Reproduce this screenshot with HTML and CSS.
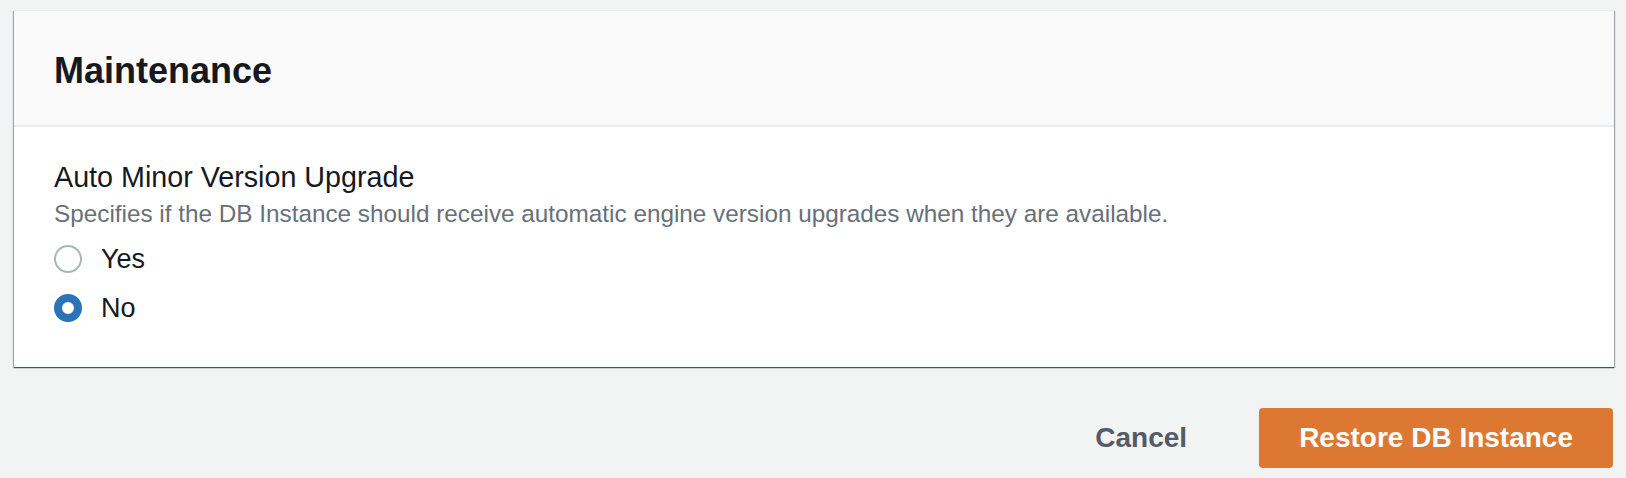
FILE: index.html
```html
<!DOCTYPE html>
<html lang="en">
<head>
<meta charset="utf-8">
<title>Maintenance</title>
<link rel="stylesheet" href="styles.css">
</head>
<body>
<div class="page">
  <section class="card">
    <header class="card-header">
      <h2 class="card-title">Maintenance</h2>
    </header>
    <div class="card-body">
      <div class="field-label">Auto Minor Version Upgrade</div>
      <div class="field-desc">Specifies if the DB Instance should receive automatic engine version upgrades when they are available.</div>
      <div class="radio-group">
        <label class="radio-row">
          <span class="radio"></span>
          <span class="radio-text">Yes</span>
        </label>
        <label class="radio-row">
          <span class="radio radio-checked"></span>
          <span class="radio-text">No</span>
        </label>
      </div>
    </div>
  </section>
  <div class="footer">
    <button class="btn-link" type="button">Cancel</button>
    <button class="btn-primary" type="button">Restore DB Instance</button>
  </div>
</div>
</body>
</html>
```

FILE: styles.css
```css
html, body {
  margin: 0;
  padding: 0;
  background: #f2f3f3;
  font-family: "Liberation Sans", Arial, sans-serif;
  color: #16191f;
}

.page {
  padding: 10px 12px 0 14px;
}

.card {
  background: #ffffff;
  border-top: 1px solid #eaeded;
  box-shadow: 0 1px 1px 0 rgba(0, 28, 36, 0.45),
              1px 1px 1px 0 rgba(0, 28, 36, 0.3),
              -1px 1px 1px 0 rgba(0, 28, 36, 0.3);
}

.card-header {
  background: #fafafa;
  border-bottom: 2px solid #eaeded;
  padding: 38px 40px 32px 40px;
}

.card-title {
  margin: 0;
  font-size: 36px;
  line-height: 44px;
  font-weight: 700;
  color: #16191f;
}

.card-body {
  padding: 33px 40px 42px 40px;
}

.field-label {
  font-size: 28.7px;
  line-height: 34px;
  color: #16191f;
}

.field-desc {
  margin-top: 5px;
  font-size: 24.3px;
  line-height: 30px;
  color: #687078;
}

.radio-group {
  margin-top: 13px;
  display: flex;
  flex-direction: column;
  gap: 15px;
}

.radio-row {
  display: flex;
  align-items: center;
  height: 34px;
}

.radio {
  box-sizing: border-box;
  width: 28px;
  height: 28px;
  border-radius: 50%;
  border: 2px solid #aab7b8;
  background: #ffffff;
  flex: none;
}

.radio-checked {
  border: 8px solid #2c73b8;
}

.radio-text {
  margin-left: 19px;
  font-size: 27px;
  line-height: 34px;
  color: #16191f;
}

.footer {
  display: flex;
  justify-content: flex-end;
  align-items: center;
  margin-top: 41px;
  padding-right: 1px;
}

.btn-link {
  background: none;
  border: none;
  font-family: inherit;
  font-size: 28px;
  font-weight: 700;
  color: #545b64;
  padding: 0;
  margin-right: 72px;
  height: 60px;
}

.btn-primary {
  background: #dd7832;
  border: none;
  border-radius: 4px;
  font-family: inherit;
  font-size: 28px;
  font-weight: 700;
  color: #ffffff;
  height: 60px;
  padding: 0 40px;
}
```
